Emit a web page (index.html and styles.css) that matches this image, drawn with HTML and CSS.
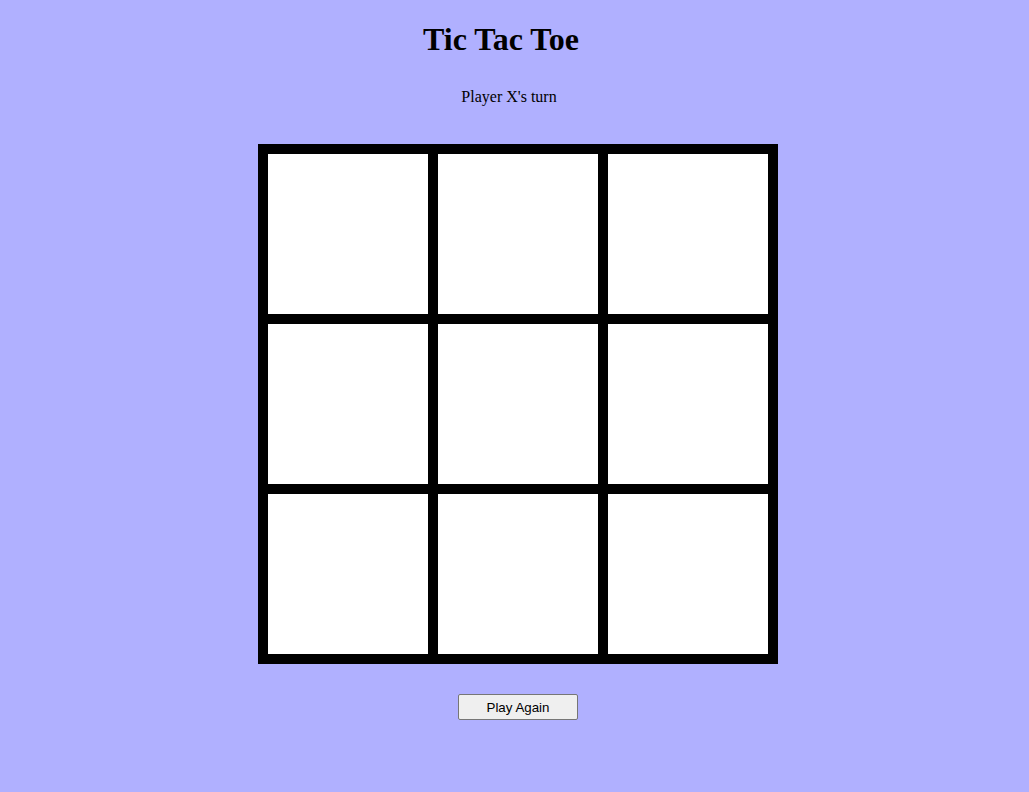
FILE: index.html
```html
<!DOCTYPE html>
<html>
<head>
<meta charset="utf-8">
<title>Tic Tac Toe</title>
<link rel="stylesheet" href="styles.css">
</head>
<body>
<div class="app">
  <h1 class="title">Tic Tac Toe</h1>
  <p class="status">Player X's turn</p>
  <div class="board">
    <div class="cell"></div><div class="cell"></div><div class="cell"></div>
    <div class="cell"></div><div class="cell"></div><div class="cell"></div>
    <div class="cell"></div><div class="cell"></div><div class="cell"></div>
  </div>
  <button class="reset">Play Again</button>
</div>
</body>
</html>
```
FILE: styles.css
```css
html, body {
  margin: 0;
  padding: 0;
}
body {
  background: #b0b0ff;
  font-family: "Liberation Serif", "Times New Roman", serif;
  color: #000;
  height: 792px;
  padding-left: 7px;
  box-sizing: border-box;
}
.app {
  display: flex;
  flex-direction: column;
  align-items: center;
  padding-top: 21px;
}
.title {
  margin: 0;
  font-size: 32px;
  line-height: 37px;
  font-weight: bold;
  padding-right: 34px;
}
.status {
  margin: 29px 0 0;
  font-size: 16px;
  line-height: 19px;
  padding-right: 18px;
}
.board {
  margin-top: 38px;
  display: grid;
  grid-template-columns: repeat(3, 160px);
  grid-template-rows: repeat(3, 160px);
  gap: 10px;
  padding: 10px;
  background: #000;
}
.cell {
  background: #fff;
}
.reset {
  margin-top: 30px;
  width: 120px;
  height: 26px;
  font-family: "Liberation Sans", Arial, sans-serif;
  font-size: 13.33px;
  background: #efefef;
  border: 1px solid #767676;
  border-radius: 2px;
  color: #000;
  padding: 0;
}
```
